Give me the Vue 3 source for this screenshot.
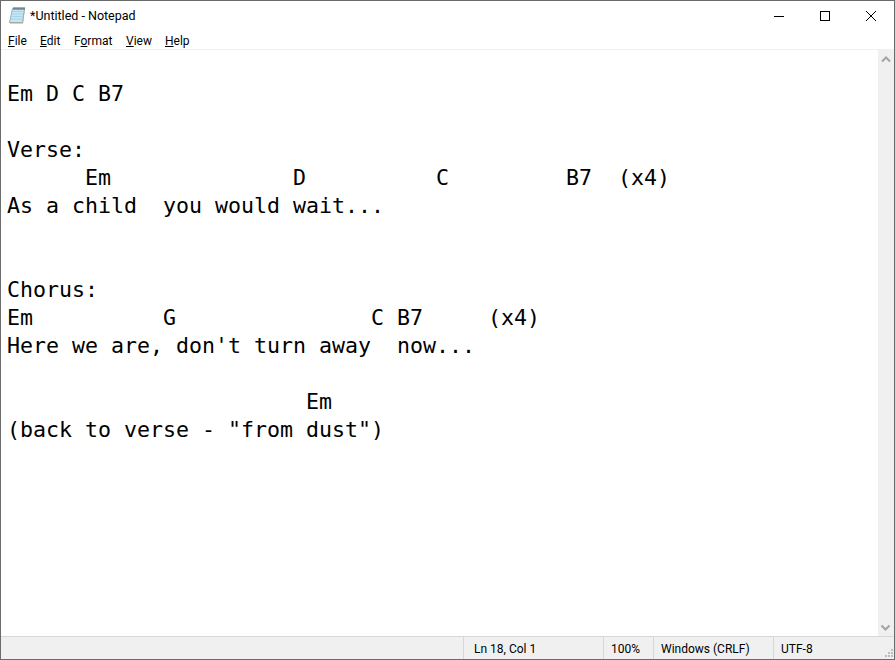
<template>
  <div class="window">
    <!-- Title bar -->
    <div class="titlebar">
      <svg class="app-icon" width="16" height="17" viewBox="0 0 16 17">
        <path d="M3.5 1.5 H15.5 L13.5 15.5 H0.5 Z" fill="#c6e6f2" stroke="#8fb0c0" />
        <path d="M3 4.5 H14.5 M2.6 7 H14.2 M2.2 9.5 H13.8 M1.8 12 H13.5" stroke="#a6d3e8" />
        <path d="M1 15.5 H13.5 L15.5 2 V5 L14 16.5 H1 Z" fill="#b5a780" />
        <path d="M5 0 V3 M7 0 V3 M9 0 V3 M11 0 V3 M13 0 V3 M15 0 V3" stroke="#4f5b66" />
      </svg>
      <span class="title">*Untitled - Notepad</span>
      <div class="controls">
        <div class="control">
          <svg width="10" height="10" viewBox="0 0 10 10"><path d="M0 5.5 H10" stroke="#000" /></svg>
        </div>
        <div class="control">
          <svg width="10" height="10" viewBox="0 0 10 10"><rect x="0.5" y="0.5" width="9" height="9" fill="none" stroke="#000" /></svg>
        </div>
        <div class="control">
          <svg width="10" height="10" viewBox="0 0 10 10"><path d="M0 0 L10 10 M10 0 L0 10" stroke="#000" stroke-width="1" /></svg>
        </div>
      </div>
    </div>

    <!-- Menu -->
    <div class="menu">
      <span v-for="m in menus" :key="m.label" class="menu-item" :class="m.cls">
        {{ m.label.slice(0, m.key) }}<u>{{ m.label[m.key] }}</u>{{ m.label.slice(m.key + 1) }}
      </span>
    </div>

    <!-- Editor -->
    <div class="editor">
      <pre class="text">{{ text }}</pre>
      <div class="scrollbar">
        <svg width="16" height="17" viewBox="0 0 16 17"><path d="M4 11.5 L8 7.5 L12 11.5" fill="none" stroke="#a3a3a3" stroke-width="2" /></svg>
        <svg width="16" height="17" viewBox="0 0 16 17"><path d="M3.5 6.5 L7.5 10.5 L11.5 6.5" fill="none" stroke="#a3a3a3" stroke-width="2" /></svg>
      </div>
    </div>

    <!-- Status bar -->
    <div class="status">
      <div class="cell spacer"></div>
      <div class="cell ln">Ln 18, Col 1</div>
      <div class="cell zoom">100%</div>
      <div class="cell eol">Windows (CRLF)</div>
      <div class="cell enc">UTF-8</div>
      <svg class="grip" width="12" height="12" viewBox="0 0 12 12">
        <path d="M9 2 h2 v2 h-2 z M6 5 h2 v2 h-2 z M9 5 h2 v2 h-2 z M3 8 h2 v2 h-2 z M6 8 h2 v2 h-2 z M9 8 h2 v2 h-2 z" fill="#bdbdbd" />
      </svg>
    </div>
  </div>
</template>

<script setup>
// Menu labels, key = index of the underlined letter
const menus = [
  { label: "File", key: 0, cls: "m-file" },
  { label: "Edit", key: 0, cls: "m-edit" },
  { label: "Format", key: 1, cls: "m-format" },
  { label: "View", key: 0, cls: "m-view" },
  { label: "Help", key: 0, cls: "m-help" },
];

const text = [
  "",
  "Em D C B7",
  "",
  "Verse:",
  "      Em              D          C         B7  (x4)",
  "As a child  you would wait...",
  "",
  "",
  "Chorus:",
  "Em          G               C B7     (x4)",
  "Here we are, don't turn away  now...",
  "",
  "                       Em",
  '(back to verse - "from dust")',
].join("\n");
</script>

<style>
html,
body {
  margin: 0;
  background: #fff;
}
</style>

<style scoped>
.window {
  width: 895px;
  height: 660px;
  box-sizing: border-box;
  border: 1px solid #6b6b6b;
  display: flex;
  flex-direction: column;
  background: #fff;
  font-family: Roboto, "Open Sans", sans-serif;
  font-size: 12px;
  color: #000;
  overflow: hidden;
}

.titlebar {
  height: 29px;
  display: flex;
  align-items: center;
  flex-shrink: 0;
}

.app-icon {
  margin-left: 8px;
  margin-right: 5px;
}

.title {
  flex: 1;
  font-size: 12.5px;
}

.controls {
  display: flex;
  align-self: flex-start;
}

.control {
  width: 46px;
  height: 29px;
  display: flex;
  align-items: center;
  justify-content: center;
}

.menu {
  height: 19px;
  box-sizing: content-box;
  display: flex;
  align-items: center;
  padding-left: 7px;
  flex-shrink: 0;
  border-bottom: 1px solid #f0f0f0;
}

.menu-item {
  white-space: pre;
  padding-top: 2px;
}

.m-file { width: 32px; }
.m-edit { width: 34px; }
.m-format { width: 52px; }
.m-view { width: 39px; }

.editor {
  flex: 1;
  display: flex;
  min-height: 0;
}

.text {
  flex: 1;
  margin: 0;
  padding: 2px 0 0 6px;
  font-family: "DejaVu Sans Mono", monospace;
  font-size: 21.6px;
  line-height: 28px;
  color: #000;
}

.scrollbar {
  width: 16px;
  background: #f0f0f0;
  display: flex;
  flex-direction: column;
  justify-content: space-between;
}

.scrollbar svg {
  display: block;
}

.status {
  height: 22px;
  flex-shrink: 0;
  display: flex;
  align-items: center;
  position: relative;
  background: #f0f0f0;
  border-top: 1px solid #d7d7d7;
}

.cell {
  height: 100%;
  box-sizing: border-box;
  border-left: 1px solid #d7d7d7;
  display: flex;
  align-items: center;
  padding-top: 1px;
  padding-left: 7px;
}

.spacer {
  width: 462px;
  border-left: none;
}

.ln {
  width: 140px;
  padding-left: 10px;
}

.zoom { width: 50px; }
.eol { width: 120px; }
.enc { flex: 1; }

.grip {
  position: absolute;
  right: 0;
  bottom: 0;
}
</style>
